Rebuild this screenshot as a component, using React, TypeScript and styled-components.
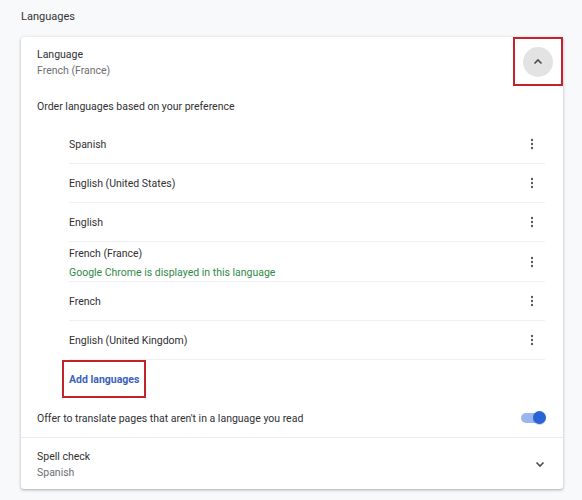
import React from "react";
import styled, { createGlobalStyle } from "styled-components";

const Global = createGlobalStyle`
  html, body { margin: 0; padding: 0; background: #f8f9fb; }
  body { font-family: Roboto, "Liberation Sans", Arial, sans-serif; font-size: 10.5px; color: #202124; }
  * { box-sizing: border-box; }
`;

const Page = styled.div`
  width: 582px;
  height: 500px;
  padding: 0 19px 0 21px;
`;

const Heading = styled.div`
  height: 37px;
  padding-top: 9px;
  line-height: 16px;
  font-size: 11px;
  color: #333;
`;

const Card = styled.div`
  width: 542px;
  background: #fff;
  border-radius: 3px;
  box-shadow: 0 1px 2px rgba(60, 64, 67, 0.25), 0 1px 3px 1px rgba(60, 64, 67, 0.12);
`;

const Row = styled.div<{ $h: number; $border?: boolean }>`
  display: flex;
  align-items: center;
  height: ${(p) => p.$h}px;
  padding-left: 16px;
  border-top: ${(p) => (p.$border ? "1px solid #e8eaed" : "none")};
`;

const Stack = styled.div<{ $pad?: number }>`
  flex: 1;
  display: flex;
  flex-direction: column;
  padding-top: ${(p) => (p.$pad ?? 2)}px;
`;

const Primary = styled.div`
  line-height: 16px;
  color: #303134;
`;

const Secondary = styled.div`
  line-height: 16px;
  color: #6b6e72;
`;

const RedBox = styled.div`
  border: 2px solid #c4232b;
`;

const ExpandWrap = styled(RedBox)`
  width: 50px;
  height: 49px;
  display: flex;
  align-items: center;
  justify-content: center;
  align-self: flex-start;
`;

const Circle = styled.div`
  width: 30px;
  height: 30px;
  border-radius: 50%;
  background: #e3e3e3;
  display: flex;
  align-items: center;
  justify-content: center;
`;

const List = styled.div`
  margin: 0 18px 0 48px;
`;

const Item = styled.div`
  display: flex;
  align-items: center;
  height: 39px;
  border-bottom: 1px solid #eef0f2;
`;

const TallItem = styled(Item)`
  height: 40px;
`;

const ItemText = styled.div`
  flex: 1;
  color: #303134;
  line-height: 20px;
  padding-top: 2px;
`;

const Green = styled.div`
  color: #2f8a48;
  line-height: 18px;
`;

const Kebab = styled.div`
  width: 26px;
  display: flex;
  flex-direction: column;
  align-items: center;
  gap: 2px;
`;

const Dot = styled.span`
  width: 2.4px;
  height: 2px;
  border-radius: 50%;
  background: #4a4c50;
  transform: scaleY(1.2);
`;

const AddRow = styled.div`
  height: 39px;
  display: flex;
  align-items: center;
`;

const AddButton = styled(RedBox)`
  margin-left: -7px;
  margin-top: -2px;
  height: 38px;
  padding: 2px 5px 0;
  display: flex;
  align-items: center;
  color: #3b62b8;
  font-weight: 700;
`;

const Toggle = styled.div`
  position: relative;
  width: 25px;
  height: 14px;
  margin-right: 17px;
`;

const Track = styled.div`
  position: absolute;
  left: 0;
  top: 2px;
  width: 23px;
  height: 10px;
  border-radius: 5px;
  background: #9bb5ee;
`;

const Knob = styled.div`
  position: absolute;
  right: 0;
  top: 0;
  width: 13px;
  height: 13px;
  border-radius: 50%;
  background: #2a62d8;
  box-shadow: 0 1px 1px rgba(0, 0, 0, 0.2);
`;

const ChevronBox = styled.div`
  width: 26px;
  margin-right: 10px;
  display: flex;
  justify-content: center;
`;

const langs = ["Spanish", "English (United States)", "English"];
const langs2 = ["French", "English (United Kingdom)"];

const Dots = () => (
  <Kebab>
    <Dot />
    <Dot />
    <Dot />
  </Kebab>
);

export default function App() {
  return (
    <Page>
      <Global />
      <Heading>Languages</Heading>
      <Card>
        <Row $h={49}>
          <Stack>
            <Primary>Language</Primary>
            <Secondary>French (France)</Secondary>
          </Stack>
          <ExpandWrap>
            <Circle>
              <svg width="10" height="10" viewBox="0 0 10 10">
                <path d="M1.5 6.5 L5 3 L8.5 6.5" fill="none" stroke="#4a4c50" strokeWidth="1.6" />
              </svg>
            </Circle>
          </ExpandWrap>
        </Row>
        <Row $h={39}>
          <Stack>
            <Primary>Order languages based on your preference</Primary>
          </Stack>
        </Row>
        <List>
          {langs.map((l) => (
            <Item key={l}>
              <ItemText>{l}</ItemText>
              <Dots />
            </Item>
          ))}
          <TallItem>
            <Stack $pad={0}>
              <ItemText>French (France)</ItemText>
              <Green>Google Chrome is displayed in this language</Green>
            </Stack>
            <Dots />
          </TallItem>
          {langs2.map((l) => (
            <Item key={l}>
              <ItemText>{l}</ItemText>
              <Dots />
            </Item>
          ))}
          <AddRow>
            <AddButton>Add languages</AddButton>
          </AddRow>
        </List>
        <Row $h={38}>
          <Stack>
            <Primary>Offer to translate pages that aren't in a language you read</Primary>
          </Stack>
          <Toggle>
            <Track />
            <Knob />
          </Toggle>
        </Row>
        <Row $h={52} $border>
          <Stack>
            <Primary>Spell check</Primary>
            <Secondary>Spanish</Secondary>
          </Stack>
          <ChevronBox>
            <svg width="10" height="10" viewBox="0 0 10 10">
              <path d="M1.5 3.5 L5 7 L8.5 3.5" fill="none" stroke="#4a4c50" strokeWidth="1.6" />
            </svg>
          </ChevronBox>
        </Row>
      </Card>
    </Page>
  );
}
